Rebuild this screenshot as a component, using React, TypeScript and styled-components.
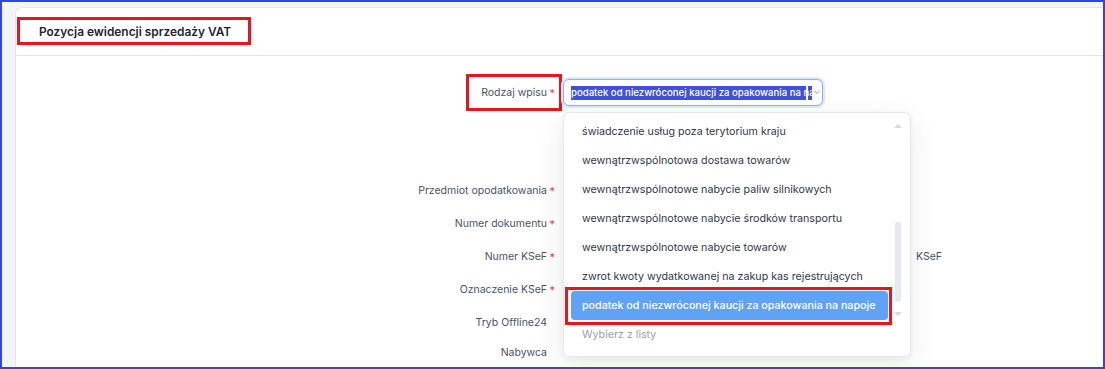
import styled, {createGlobalStyle, css} from 'styled-components';

const GlobalStyle = createGlobalStyle`
  html, body {
    margin: 0;
    padding: 0;
    background: #fff;
  }
  body {
    font-family: Inter, "Noto Sans", "Liberation Sans", sans-serif;
    -webkit-font-smoothing: antialiased;
  }
  * {
    box-sizing: border-box;
  }
`;

const OPTIONS = [
    'świadczenie usług poza terytorium kraju',
    'wewnątrzwspólnotowa dostawa towarów',
    'wewnątrzwspólnotowe nabycie paliw silnikowych',
    'wewnątrzwspólnotowe nabycie środków transportu',
    'wewnątrzwspólnotowe nabycie towarów',
    'zwrot kwoty wydatkowanej na zakup kas rejestrujących',
    'podatek od niezwróconej kaucji za opakowania na napoje',
];

const FIELDS = [
    {label: 'Przedmiot opodatkowania', required: true, h: 33},
    {label: 'Numer dokumentu', required: true, h: 33},
    {label: 'Numer KSeF', required: true, h: 33, ksef: true},
    {label: 'Oznaczenie KSeF', required: true, h: 33},
    {label: 'Tryb Offline24', required: false, h: 30},
    {label: 'Nabywca', required: false, h: 30, empty: true},
];

const App = () => {
    const selected = OPTIONS.length - 1;

    return <>
        <GlobalStyle/>
        <Frame>
            <Card>
                <CardHeader>
                    <Title>Pozycja ewidencji sprzedaży VAT</Title>
                </CardHeader>

                <CardBody>
                    <Row $h={37}>
                        <Label $marked>
                            Rodzaj wpisu<Star $show>*</Star>
                        </Label>
                        <Field>
                            <SelectWrap>
                                <Select>
                                    <SelectedText>podatek od niezwróconej kaucji za opakowania na napoje</SelectedText>
                                    <Chevron>⌄</Chevron>
                                </Select>

                                <Dropdown>
                                    <List>
                                        {OPTIONS.map((opt, i) =>
                                            <Option key={opt} $active={i === selected}>{opt}</Option>
                                        )}
                                        <Option $placeholder>Wybierz z listy</Option>
                                    </List>
                                    <ScrollCol>
                                        <Arrow/>
                                        <Thumb/>
                                        <Arrow $down/>
                                    </ScrollCol>
                                </Dropdown>
                            </SelectWrap>
                        </Field>
                    </Row>

                    <Spacer/>

                    {FIELDS.map(f =>
                        <Row key={f.label} $h={f.h}>
                            <Label>
                                {f.label}<Star $show={f.required}>*</Star>
                            </Label>
                            <Field>
                                {!f.empty && <Input $wide={f.ksef}/>}
                                {f.ksef && <Check><Box/>KSeF</Check>}
                            </Field>
                        </Row>
                    )}
                </CardBody>
            </Card>
        </Frame>
    </>;
};

export default App;


const Frame = styled.div`
  width: 1105px;
  height: 369px;
  border: 2px solid #2f45ea;
  background: #f3f4f7;
  padding: 5px 0 0 13px;
  overflow: hidden;
`;

const Card = styled.div`
  background: #fff;
  border: 1px solid #e4e6eb;
  border-right: none;
  border-radius: 7px 0 0 0;
  height: 400px;
`;

const CardHeader = styled.div`
  height: 48px;
  border-bottom: 1px solid #e4e6eb;
  padding: 9px 0 0 1px;
`;

const Title = styled.h2`
  display: inline-flex;
  align-items: center;
  height: 28px;
  margin: 0;
  padding: 0 17px 0 19px;
  border: 3px solid #e3171f;
  font-size: 11.9px;
  font-weight: 600;
  color: #1e2433;
`;

const CardBody = styled.div`
  padding-top: 18px;
  display: flex;
  flex-direction: column;
`;

const Row = styled.div<{$h: number}>`
  display: grid;
  grid-template-columns: 546px 1fr;
  column-gap: 1px;
  align-items: center;
  height: ${p => p.$h}px;
`;

const Spacer = styled.div`
  height: 61px;
`;

const Label = styled.label<{$marked?: boolean}>`
  justify-self: end;
  display: flex;
  align-items: center;
  height: 37px;
  padding: 0 4px 0 12px;
  border: 3px solid ${p => p.$marked ? '#e3171f' : 'transparent'};
  font-size: 10.5px;
  color: #4a5366;
  white-space: nowrap;
`;

const Star = styled.span<{$show?: boolean}>`
  display: inline-block;
  width: 8px;
  text-align: right;
  color: #e0455a;
  font-size: 11px;
  visibility: ${p => p.$show ? 'visible' : 'hidden'};
`;

const Field = styled.div`
  display: flex;
  align-items: center;
  gap: 10px;
`;

const SelectWrap = styled.div`
  position: relative;
`;

const Select = styled.div`
  display: flex;
  align-items: center;
  width: 260px;
  height: 27px;
  padding: 0 6px 0 7px;
  border: 1px solid #8eaef0;
  border-radius: 6px;
  box-shadow: 0 0 0 2px #dfe8fb;
  background: #fff;
`;

const SelectedText = styled.span`
  flex: 0 0 241px;
  overflow: hidden;
  white-space: nowrap;
  height: 14px;
  line-height: 14px;
  font-size: 9.6px;
  font-weight: 500;
  color: #fff;
  background: linear-gradient(90deg, #3f51d6 0, #3f51d6 235px, #fff 235px, #fff 237px, #3f51d6 237px);
`;

const Chevron = styled.span`
  margin-left: 1px;
  margin-top: -6px;
  font-size: 10px;
  color: #9aa3b2;
`;

const Dropdown = styled.div`
  position: absolute;
  z-index: 10;
  top: calc(100% + 6px);
  left: 0;
  width: 348px;
  height: 245px;
  display: grid;
  grid-template-columns: minmax(0, 1fr) 16px;
  padding-right: 4px;
  background: #fff;
  border: 1px solid #e6e8ed;
  border-radius: 6px;
  box-shadow: 0 10px 30px rgba(30, 40, 70, 0.09), 0 2px 6px rgba(30, 40, 70, 0.05);
`;

const List = styled.ul`
  list-style: none;
  min-width: 0;
  margin: 0;
  padding: 4px 2px 8px 7px;
`;

const Option = styled.li<{$active?: boolean; $placeholder?: boolean}>`
  position: relative;
  display: flex;
  align-items: center;
  height: 29px;
  padding-left: 11px;
  border-radius: 4px;
  font-size: 10.7px;
  color: #30384a;
  white-space: nowrap;

  ${p => p.$active && css`
    background: #5fa2f6;
    color: #fff;
    font-weight: 500;

    &::after {
      content: '';
      position: absolute;
      inset: -4px -4px -5px -6px;
      border: 3px solid #e3171f;
    }
  `}

  ${p => p.$placeholder && css`
    color: #9aa1ad;
  `}
`;

const ScrollCol = styled.div`
  display: flex;
  flex-direction: column;
  align-items: center;
  padding-top: 11px;
`;

const Arrow = styled.div<{$down?: boolean}>`
  width: 0;
  height: 0;
  border-left: 4px solid transparent;
  border-right: 4px solid transparent;
  ${p => p.$down
        ? css`border-top: 4px solid #d5d9e0; margin-top: 10px;`
        : css`border-bottom: 4px solid #d5d9e0;`}
`;

const Thumb = styled.div`
  width: 6px;
  height: 80px;
  margin-top: 94px;
  border-radius: 3px;
  background: #e4e8ef;
`;

const Input = styled.div<{$wide?: boolean}>`
  width: ${p => p.$wide ? 323 : 262}px;
  height: 27px;
  border: 1px solid #dfe2e8;
  border-radius: 6px;
  background: #fff;
`;

const Check = styled.label`
  display: flex;
  align-items: center;
  gap: 6px;
  font-size: 10.5px;
  color: #4a5366;
  white-space: nowrap;
`;

const Box = styled.span`
  width: 14px;
  height: 14px;
  border: 1px solid #cfd4dc;
  border-radius: 3px;
`;
